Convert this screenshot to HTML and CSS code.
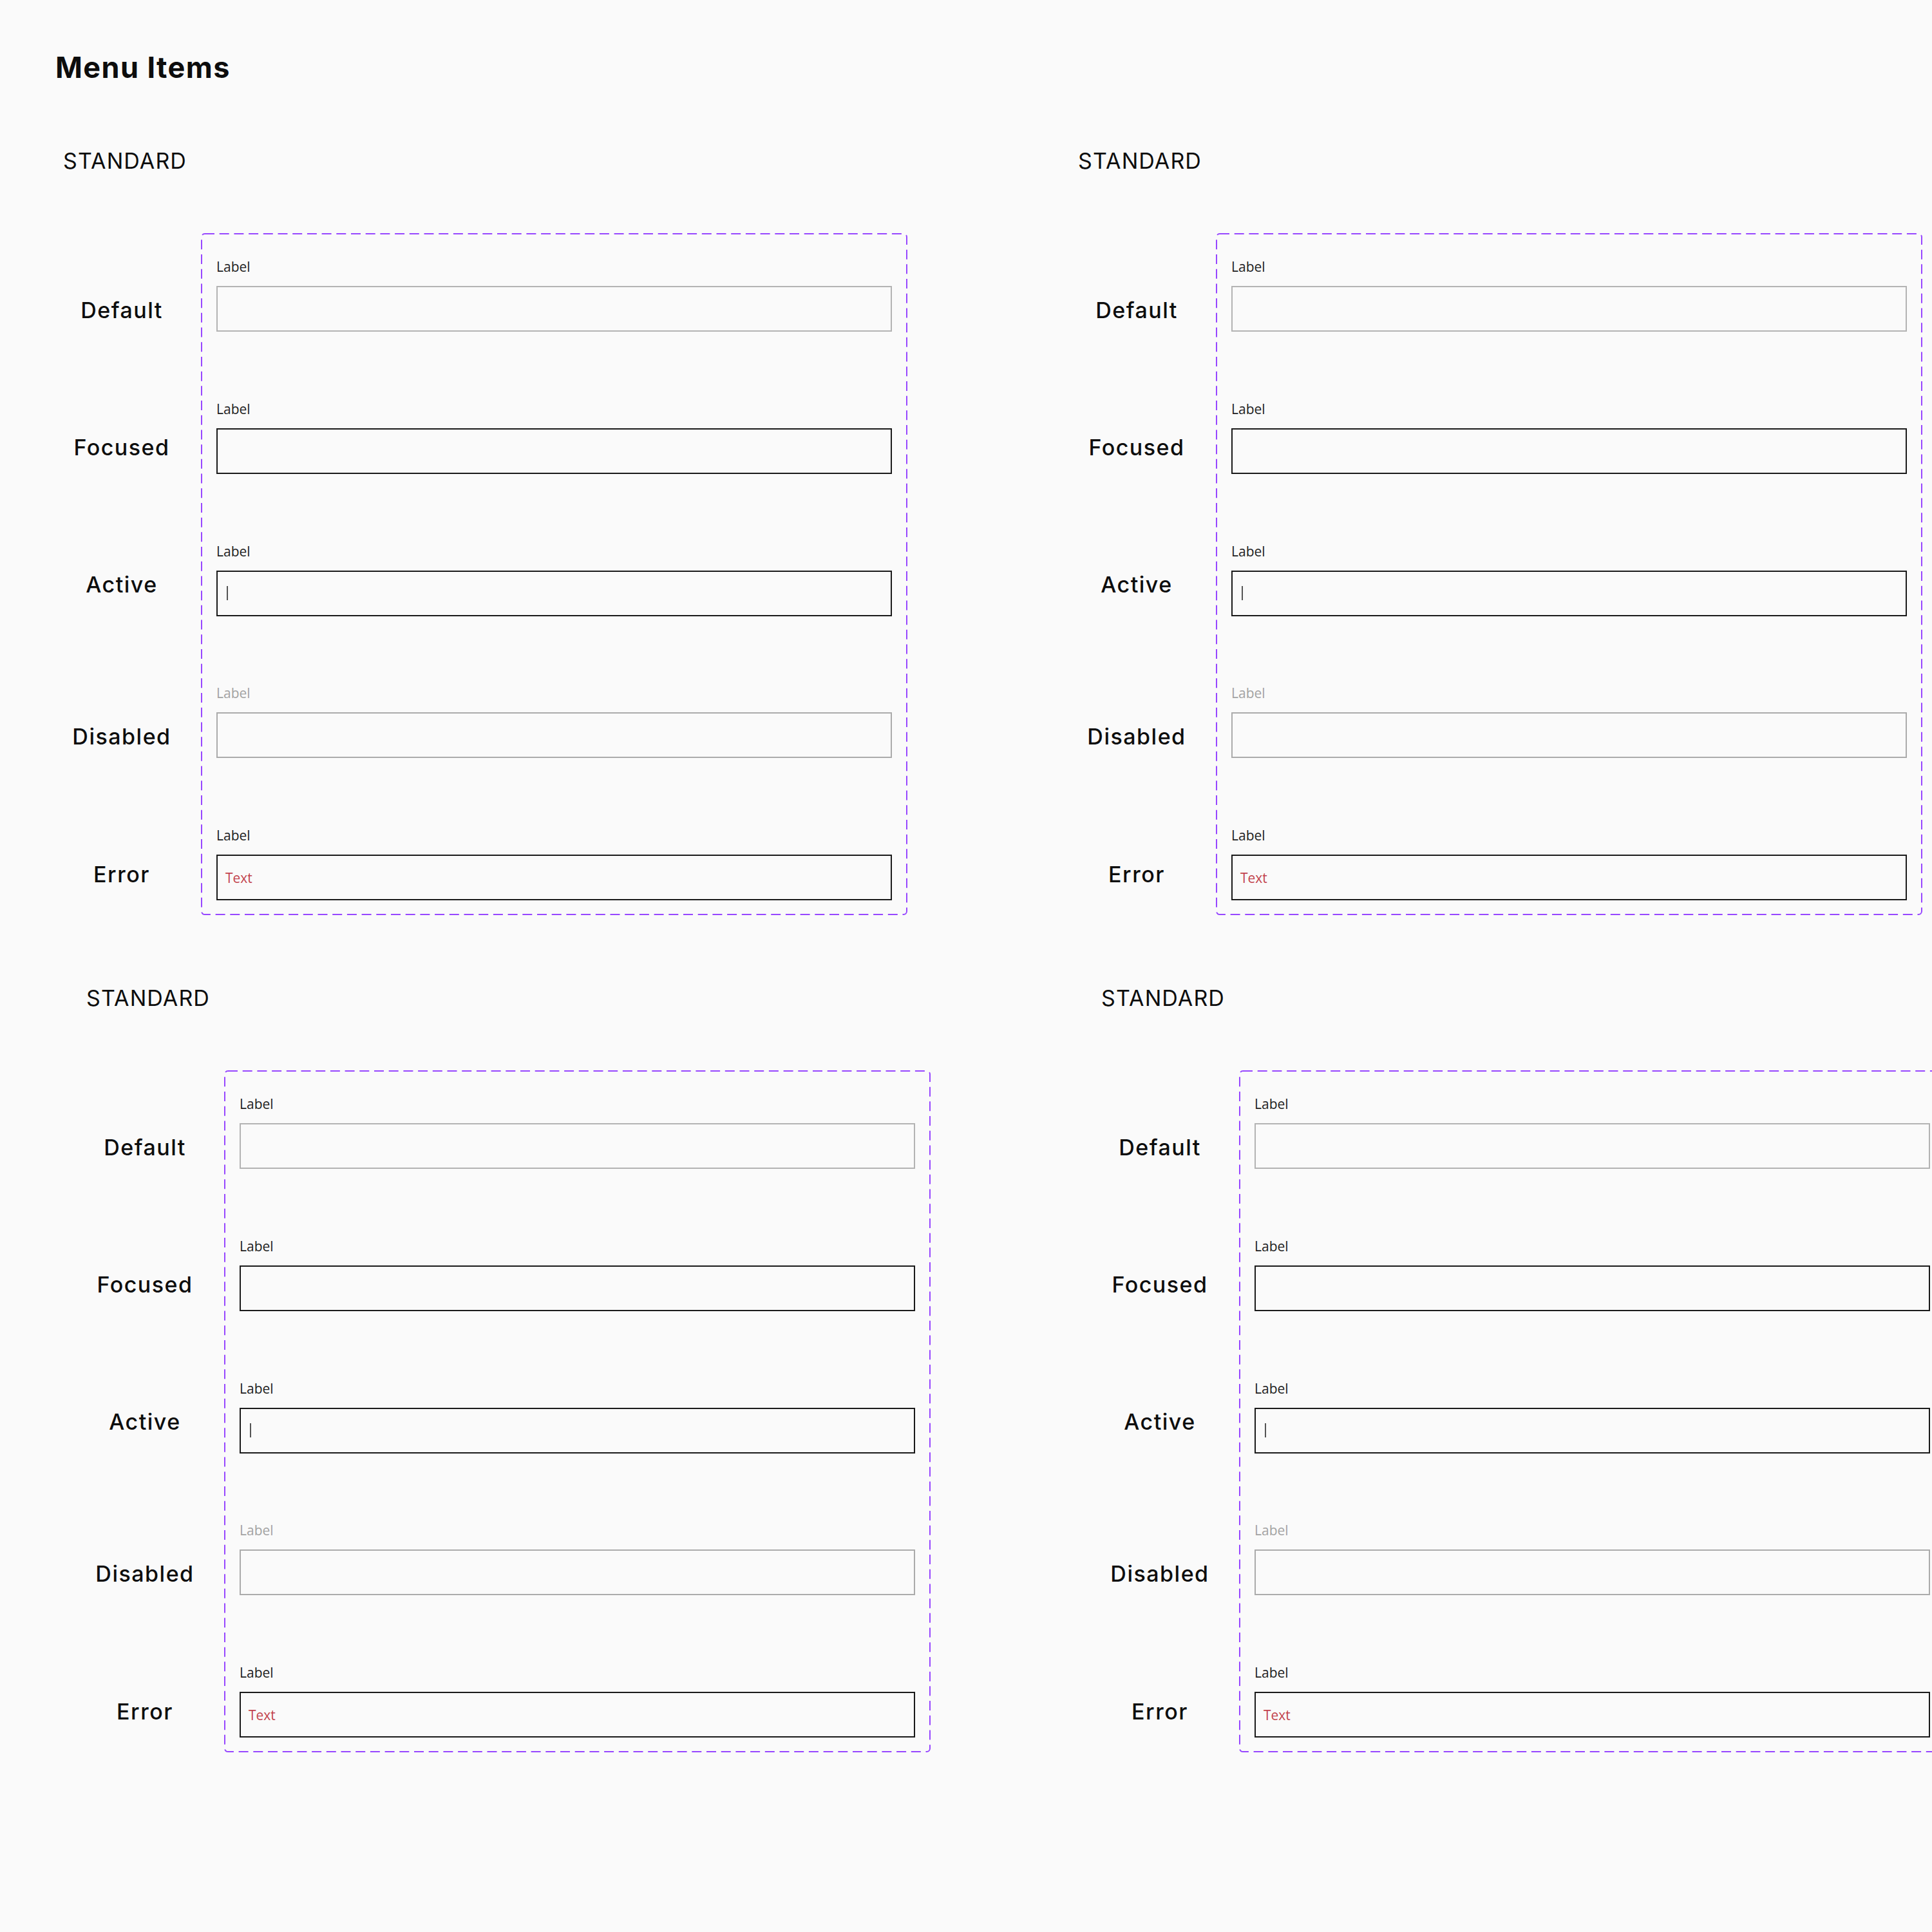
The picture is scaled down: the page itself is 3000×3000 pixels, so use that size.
FILE: index.html
```html
<!DOCTYPE html>
<html lang="en">
<head>
<meta charset="utf-8">
<title>Menu Items</title>
<link rel="stylesheet" href="styles.css">
</head>
<body>
<h1 class="page-title">Menu Items</h1>

<main class="board">

  <section class="variant">
    <h2 class="variant-title">STANDARD</h2>
    <div class="variant-body">
      <ul class="states">
        <li class="state">Default</li>
        <li class="state">Focused</li>
        <li class="state">Active</li>
        <li class="state">Disabled</li>
        <li class="state">Error</li>
      </ul>
      <div class="component-set">
        <svg class="set-outline" aria-hidden="true"><rect></rect></svg>
        <div class="field"><span class="field-label">Label</span><div class="input"></div></div>
        <div class="field"><span class="field-label">Label</span><div class="input is-focused"></div></div>
        <div class="field"><span class="field-label">Label</span><div class="input is-focused"><span class="caret"></span></div></div>
        <div class="field is-disabled"><span class="field-label">Label</span><div class="input"></div></div>
        <div class="field"><span class="field-label">Label</span><div class="input is-focused"><span class="input-value is-error">Text</span></div></div>
      </div>
    </div>
  </section>

  <section class="variant">
    <h2 class="variant-title">STANDARD</h2>
    <div class="variant-body">
      <ul class="states">
        <li class="state">Default</li>
        <li class="state">Focused</li>
        <li class="state">Active</li>
        <li class="state">Disabled</li>
        <li class="state">Error</li>
      </ul>
      <div class="component-set">
        <svg class="set-outline" aria-hidden="true"><rect></rect></svg>
        <div class="field"><span class="field-label">Label</span><div class="input"></div></div>
        <div class="field"><span class="field-label">Label</span><div class="input is-focused"></div></div>
        <div class="field"><span class="field-label">Label</span><div class="input is-focused"><span class="caret"></span></div></div>
        <div class="field is-disabled"><span class="field-label">Label</span><div class="input"></div></div>
        <div class="field"><span class="field-label">Label</span><div class="input is-focused"><span class="input-value is-error">Text</span></div></div>
      </div>
    </div>
  </section>

  <section class="variant variant--offset">
    <h2 class="variant-title">STANDARD</h2>
    <div class="variant-body">
      <ul class="states">
        <li class="state">Default</li>
        <li class="state">Focused</li>
        <li class="state">Active</li>
        <li class="state">Disabled</li>
        <li class="state">Error</li>
      </ul>
      <div class="component-set">
        <svg class="set-outline" aria-hidden="true"><rect></rect></svg>
        <div class="field"><span class="field-label">Label</span><div class="input"></div></div>
        <div class="field"><span class="field-label">Label</span><div class="input is-focused"></div></div>
        <div class="field"><span class="field-label">Label</span><div class="input is-focused"><span class="caret"></span></div></div>
        <div class="field is-disabled"><span class="field-label">Label</span><div class="input"></div></div>
        <div class="field"><span class="field-label">Label</span><div class="input is-focused"><span class="input-value is-error">Text</span></div></div>
      </div>
    </div>
  </section>

  <section class="variant variant--offset">
    <h2 class="variant-title">STANDARD</h2>
    <div class="variant-body">
      <ul class="states">
        <li class="state">Default</li>
        <li class="state">Focused</li>
        <li class="state">Active</li>
        <li class="state">Disabled</li>
        <li class="state">Error</li>
      </ul>
      <div class="component-set">
        <svg class="set-outline" aria-hidden="true"><rect></rect></svg>
        <div class="field"><span class="field-label">Label</span><div class="input"></div></div>
        <div class="field"><span class="field-label">Label</span><div class="input is-focused"></div></div>
        <div class="field"><span class="field-label">Label</span><div class="input is-focused"><span class="caret"></span></div></div>
        <div class="field is-disabled"><span class="field-label">Label</span><div class="input"></div></div>
        <div class="field"><span class="field-label">Label</span><div class="input is-focused"><span class="input-value is-error">Text</span></div></div>
      </div>
    </div>
  </section>

</main>
</body>
</html>
```

FILE: styles.css
```css
html,
body {
  margin: 0;
  padding: 0;
  overflow: hidden;
  background: #fafafa;
  color: #0d0d0d;
  font-family: Inter, "Liberation Sans", sans-serif;
}

/* Page heading */
.page-title {
  margin: 0;
  padding: 77px 0 0 86px;
  font-size: 45px;
  line-height: 56px;
  font-weight: 700;
  letter-spacing: 1.4px;
}

/* 2 x 2 board of variants */
.board {
  display: grid;
  grid-template-columns: 1576px 1576px;
  row-gap: 109px;
  padding: 97px 0 0 98px;
}

.variant--offset {
  margin-left: 36px;
}

.variant-title {
  margin: 0 0 92px;
  font-size: 34px;
  line-height: 40px;
  font-weight: 400;
  letter-spacing: 1.1px;
}

.variant-body {
  display: flex;
  gap: 32px;
  align-items: flex-start;
}

/* State names on the left, each set beside its field */
.states {
  list-style: none;
  margin: 0;
  padding: 100px 0 0;
  width: 182px;
  display: flex;
  flex-direction: column;
}

.state {
  height: 40px;
  font-size: 34px;
  line-height: 40px;
  font-weight: 500;
  letter-spacing: 1.5px;
  text-align: center;
  white-space: nowrap;
}

.state:nth-child(2) { margin-top: 173px; }
.state:nth-child(3) { margin-top: 173px; }
.state:nth-child(4) { margin-top: 196px; }
.state:nth-child(5) { margin-top: 174px; }

/* Dashed component-set frame */
.component-set {
  position: relative;
  width: 1097px;
  box-sizing: border-box;
  padding: 40px 24px 23px;
  display: flex;
  flex-direction: column;
  gap: 107.75px;
}

.set-outline {
  position: absolute;
  inset: 0;
  width: 100%;
  height: 100%;
  overflow: visible;
  pointer-events: none;
}

.set-outline rect {
  x: 1px;
  y: 1px;
  width: calc(100% - 2px);
  height: calc(100% - 2px);
  rx: 5px;
  fill: none;
  stroke: #9747ff;
  stroke-width: 2px;
  stroke-dasharray: 15 7.7;
}

/* Text field */
.field {
  display: flex;
  flex-direction: column;
  gap: 18px;
}

.field-label {
  font-family: "Open Sans", "Noto Sans", sans-serif;
  font-size: 21px;
  line-height: 24px;
  color: #1e1e1e;
}

.input {
  height: 71px;
  box-sizing: border-box;
  border: 2px solid #b3b3b3;
  background: #fafafa;
  display: flex;
  align-items: center;
  padding: 0 12px;
}

.input.is-focused {
  border-color: #1a1a1a;
}

.field.is-disabled .field-label {
  color: #a3a3a3;
}

.field.is-disabled .input {
  border-color: #ababab;
}

.caret {
  width: 1.5px;
  height: 22px;
  background: #555;
  margin-left: 2px;
}

.input-value {
  font-family: "Open Sans", "Noto Sans", sans-serif;
  font-size: 21px;
  line-height: 24px;
}

.input-value.is-error {
  color: #c2434d;
}
```
